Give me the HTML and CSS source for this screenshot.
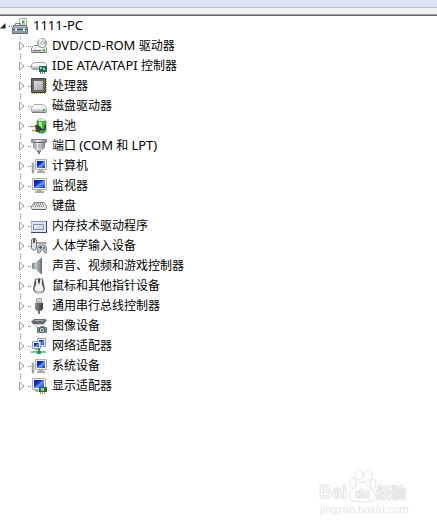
FILE: index.html
```
<!DOCTYPE html>
<html lang="zh-CN">
<head>
  <meta charset="UTF-8" />
  <meta name="viewport" content="width=device-width, initial-scale=1.0"/>
  <title>设备管理器</title>
  <link rel="stylesheet" href="styles.css">
</head>
<body>
  <!-- shared gradients and shapes -->
  <svg class="defs" width="0" height="0" aria-hidden="true">
    <defs>
      <linearGradient id="screen" x1="0" y1="0" x2="1" y2="1">
        <stop offset="0" stop-color="#0a1fa8"/><stop offset=".4" stop-color="#0f2fd0"/><stop offset=".55" stop-color="#6f98f4"/><stop offset="1" stop-color="#1236c4"/>
      </linearGradient>
      <linearGradient id="metal" x1="0" y1="0" x2="0" y2="1">
        <stop offset="0" stop-color="#fafafa"/><stop offset="1" stop-color="#a3a5a8"/>
      </linearGradient>
      <linearGradient id="steel" x1="0" y1="0" x2="1" y2="0">
        <stop offset="0" stop-color="#84888c"/><stop offset=".4" stop-color="#eceeef"/><stop offset="1" stop-color="#777b80"/>
      </linearGradient>
      <linearGradient id="dark" x1="0" y1="0" x2="1" y2="0">
        <stop offset="0" stop-color="#8d9094"/><stop offset=".5" stop-color="#606367"/><stop offset="1" stop-color="#3c3e42"/>
      </linearGradient>
      <linearGradient id="cone" x1="0" y1="0" x2="1" y2="0">
        <stop offset="0" stop-color="#c3d0d6"/><stop offset=".6" stop-color="#8c999f"/><stop offset="1" stop-color="#5f696e"/>
      </linearGradient>
      <linearGradient id="chip" x1="0" y1="0" x2="1" y2="1">
        <stop offset="0" stop-color="#e0e0e0"/><stop offset="1" stop-color="#a2a4a6"/>
      </linearGradient>
      <symbol id="arrow" viewBox="0 0 6 10">
        <path d="M.5 1v8l4.500-4z" fill="#fff" stroke="#a0a0a0"/>
      </symbol>
      <symbol id="pc" viewBox="0 0 16 16">
        <path d="M1 5h2v10H1z" fill="#b4b8bc" stroke="#85898e" stroke-width=".5"/>
        <path d="M1 12h1v2H1z" fill="#35b535"/>
        <path d="M4.500 1.500h11v10h-11z" fill="#f0efe8" stroke="#b0afa6"/>
        <path d="M6 3h8v7H6z" fill="url(#screen)"/>
        <path d="M8 12h4v1h2v2H6v-2h2z" fill="#a9a9a4"/>
      </symbol>
    </defs>
  </svg>

  <div class="toolbar"></div>
  <div class="band"></div>

  <main class="panel">
    <div class="node root">
      <button class="toggle" aria-label="折叠 1111-PC" aria-expanded="true"><svg viewBox="0 0 6 6"><path d="M5.500 0v5.500H0z" fill="#222"/></svg></button>
      <span class="dots"></span>
      <svg class="icon" viewBox="0 0 16 16"><path d="M7.500.5h7v8h-7z" fill="#f2f3f0" stroke="#aaada9"/><path d="M10 2h3v6h-3z" fill="#bdc8b9"/><path d="M10 3h2v2h-2z" fill="#49a83b"/><path d="M3.500 8V5.500h5V8" fill="none" stroke="#7c858d"/><path d="M1.500 7.500h13l1 3v5H.5v-5z" fill="#8b9caa" stroke="#5f6d79"/><path d="M2 8.500h12" stroke="#b9c6d0"/><path d="M1 11.500h14" stroke="#4b5a68"/><path d="M3 10h2v3H3zM11 10h2v3h-2z" fill="#dae1e7"/></svg>
      <span class="label"><span class="en">1111-PC</span></span>
    </div>

    <ul class="tree">
      <li class="node">
        <button class="toggle" aria-label="展开 DVD/CD-ROM 驱动器"><svg><use href="#arrow"/></svg></button>
        <span class="dots"></span>
        <svg class="icon" viewBox="0 0 16 16"><path d="M3 7.500h10l2.500 2.500v4.500H.5V10z" fill="#eee" stroke="#909295"/><circle cx="11" cy="5" r="4.500" fill="#e0e3e3" stroke="#8f9394"/><path d="M11 5L8 1l3-.5zM11 5l-1 4 3 0z" fill="#fff"/><path d="M11 5l4-2v3z" fill="#8fc985"/><circle cx="11" cy="5" r="1.300" fill="#fff" stroke="#999" stroke-width=".6"/><path d="M1 10.500h14V15H1z" fill="url(#metal)"/><path d="M2 12.500h8M1 14.500h14" stroke="#777"/><path d="M12 11h2v2h-2z" fill="#37c42e"/></svg>
        <span class="label"><span class="en">DVD/CD-ROM </span>驱动器</span>
      </li>
      <li class="node">
        <button class="toggle" aria-label="展开 IDE ATA/ATAPI 控制器"><svg><use href="#arrow"/></svg></button>
        <span class="dots"></span>
        <svg class="icon" viewBox="0 0 16 16"><path d="M3 4.500h10l2.500 2v4l-1 1h-13l-1-1v-4z" fill="#fafafa" stroke="#a0a2a5"/><path d="M1 7.500h14V11H1z" fill="url(#metal)"/><path d="M8 8h8v6H8z" fill="#1d6f50"/><path d="M9 9h2v2H9zM12 10h2v2h-2z" fill="#8fd1b3"/><path d="M9.500 14v2M11.500 14v2M13.500 14v2" stroke="#4a9a6c"/></svg>
        <span class="label"><span class="en">IDE ATA/ATAPI </span>控制器</span>
      </li>
      <li class="node">
        <button class="toggle" aria-label="展开 处理器"><svg><use href="#arrow"/></svg></button>
        <span class="dots"></span>
        <svg class="icon" viewBox="0 0 16 16"><path d="M15.500 1v14M1 15.500h14" stroke="#d09a2c" stroke-dasharray="1 1"/><path d="M.5.500h14v14H.5z" fill="#66686a" stroke="#444648"/><path d="M3 3h9v9H3z" fill="url(#chip)"/></svg>
        <span class="label">处理器</span>
      </li>
      <li class="node">
        <button class="toggle" aria-label="展开 磁盘驱动器"><svg><use href="#arrow"/></svg></button>
        <span class="dots"></span>
        <svg class="icon" viewBox="0 0 16 16"><path d="M3.500 6.500h9l3 3v4l-1 1h-13l-1-1v-4z" fill="#f7f7f7" stroke="#a8aaac"/><path d="M1 10h14v4H1z" fill="url(#metal)"/><path d="M1 14.500h14" stroke="#77797c"/><path d="M12 11h2v2h-2z" fill="#37c42e"/></svg>
        <span class="label">磁盘驱动器</span>
      </li>
      <li class="node">
        <button class="toggle" aria-label="展开 电池"><svg><use href="#arrow"/></svg></button>
        <span class="dots"></span>
        <svg class="icon" viewBox="0 0 16 16"><path d="M6 3l2-2h4l3 2v10l-2 2H8l-2-2z" fill="#3fb235" stroke="#3a8037" stroke-width=".7"/><path d="M8 1h5l1 2H7z" fill="#e4e8e2"/><path d="M8 4h3v6H8z" fill="#b2f0a4"/><path d="M0 8.500h4M1 12.500h4" stroke="#c99a2a" stroke-width="1.500"/><path d="M4 7h3l3 2v3l-2 2H5z" fill="#3d4241"/><path d="M9 11c5 2 6-1 5-4" fill="none" stroke="#303331" stroke-width="1.500"/></svg>
        <span class="label">电池</span>
      </li>
      <li class="node">
        <button class="toggle" aria-label="展开 端口 (COM 和 LPT)"><svg><use href="#arrow"/></svg></button>
        <span class="dots"></span>
        <svg class="icon" viewBox="0 0 16 16"><path d="M.5 1.500h15v3h-2v5l-2 2h-7l-2-2v-5h-2z" fill="url(#steel)" stroke="#85888c"/><path d="M3 4.500h10" stroke="#5f6367"/><path d="M5 6v4M8 6v4M11 6v4" stroke="#8b8f93"/><path d="M5 11h6v2H5z" fill="#bfc2c4"/><path d="M6 13h4v1H9v2H7v-2H6z" fill="#777a7e"/></svg>
        <span class="label">端口 <span class="en">(COM </span>和 <span class="en">LPT)</span></span>
      </li>
      <li class="node">
        <button class="toggle" aria-label="展开 计算机"><svg><use href="#arrow"/></svg></button>
        <span class="dots"></span>
        <svg class="icon"><use href="#pc"/></svg>
        <span class="label">计算机</span>
      </li>
      <li class="node">
        <button class="toggle" aria-label="展开 监视器"><svg><use href="#arrow"/></svg></button>
        <span class="dots"></span>
        <svg class="icon" viewBox="0 0 16 16"><path d="M1.500.5h14v11h-14z" fill="#f0efe8" stroke="#b0afa6"/><path d="M3 2h11v8H3z" fill="url(#screen)"/><path d="M6 12h5v1h2v2H4v-2h2z" fill="#a9a9a4"/></svg>
        <span class="label">监视器</span>
      </li>
      <li class="node">
        <button class="toggle" aria-label="展开 键盘"><svg><use href="#arrow"/></svg></button>
        <span class="dots"></span>
        <svg class="icon" viewBox="0 0 16 16"><path d="M3 4.500h10l2.500 4v2l-1 1h-13l-1-1v-2z" fill="#e2e3e5" stroke="#85888b"/><path d="M3 6.500h10M2 8.500h12" stroke="#888b8f" stroke-dasharray="1 1"/><path d="M4 7.500h10M3 5.500h10" stroke="#a4a6a9" stroke-dasharray="1 1"/><path d="M1 11.500h14" stroke="#606367"/></svg>
        <span class="label">键盘</span>
      </li>
      <li class="node">
        <button class="toggle" aria-label="展开 内存技术驱动程序"><svg><use href="#arrow"/></svg></button>
        <span class="dots"></span>
        <svg class="icon" viewBox="0 0 16 16"><path d="M0 3.500h16v11H0z" fill="#dfe5f3" stroke="#8591ae"/><path d="M15.500 3v11.500H0" fill="none" stroke="#3e465c"/><path d="M2.500 6.500h10v5h-10z" fill="#d3dbeb" stroke="#7f8db0"/><path d="M3 11l6-4H3z" fill="#eff2f8"/></svg>
        <span class="label">内存技术驱动程序</span>
      </li>
      <li class="node">
        <button class="toggle" aria-label="展开 人体学输入设备"><svg><use href="#arrow"/></svg></button>
        <span class="dots"></span>
        <svg class="icon" viewBox="0 0 16 16"><path d="M.5 2l1-1.500h3L5.500 3v6l-1 3h-3l-1-2z" fill="#e1e3e5" stroke="#74797e"/><path d="M2 1h2v4H2z" fill="#565b62"/><path d="M6 4.500h9.500M6 5.500h9.500" stroke="#9aa2a9"/><path d="M7 8l1-1h6l1.500 2v6h-2l-1-3H10l-1 3H6.500v-5z" fill="#b9c3cc" stroke="#6f7982" stroke-width=".8"/><path d="M8 9.500h3M9.500 8v3" stroke="#4d565f"/><path d="M12 9h2v2h-2z" fill="#3f86bb"/></svg>
        <span class="label">人体学输入设备</span>
      </li>
      <li class="node">
        <button class="toggle" aria-label="展开 声音、视频和游戏控制器"><svg><use href="#arrow"/></svg></button>
        <span class="dots"></span>
        <svg class="icon" viewBox="0 0 16 16"><path d="M1.500 5.500h3v5h-3z" fill="#9aa5ab" stroke="#7d888e"/><path d="M4 5l6-5h1v16h-1l-6-5z" fill="url(#cone)"/><path d="M10.500 0v16" stroke="#667075"/></svg>
        <span class="label">声音、视频和游戏控制器</span>
      </li>
      <li class="node">
        <button class="toggle" aria-label="展开 鼠标和其他指针设备"><svg><use href="#arrow"/></svg></button>
        <span class="dots"></span>
        <svg class="icon" viewBox="0 0 16 16"><path d="M4 1Q8-.5 12 1l2 10q-1 4.500-6 4.500T2 11z" fill="#5a5d60"/><path d="M5 1.500Q8 .5 11 1.500 10 7 12.500 10q0 5-4.500 5t-4.500-5Q6 7 5 1.500z" fill="#f3f3f3"/><path d="M7 1h2v4H7z" fill="#45484b"/><path d="M8 5v2" stroke="#999"/><path d="M5 13q3 2 6 0" fill="none" stroke="#b0b2b4"/></svg>
        <span class="label">鼠标和其他指针设备</span>
      </li>
      <li class="node">
        <button class="toggle" aria-label="展开 通用串行总线控制器"><svg><use href="#arrow"/></svg></button>
        <span class="dots"></span>
        <svg class="icon" viewBox="0 0 16 16"><path d="M5.500.5h5V5h-5z" fill="#e9eaeb" stroke="#9b9da0"/><path d="M7 2v2h2V2" fill="none" stroke="#aaa"/><path d="M4 5h8v6l-2 2H6l-2-2z" fill="url(#dark)"/><path d="M7 13h2v3H7z" fill="#76797c"/></svg>
        <span class="label">通用串行总线控制器</span>
      </li>
      <li class="node">
        <button class="toggle" aria-label="展开 图像设备"><svg><use href="#arrow"/></svg></button>
        <span class="dots"></span>
        <svg class="icon" viewBox="0 0 16 16"><path d="M3 1h11l2 1-3 4H2L0 4z" fill="#656c71"/><path d="M4 2h9l-1 1H3z" fill="#aab3b8"/><path d="M2 6.500h11" stroke="#c3c8cb"/><path d="M3 7l5 2v2z" fill="#a4aaae"/><path d="M6 9h3l1-1h3l1 1h2v6H6z" fill="#758089"/><circle cx="11" cy="12" r="2.600" fill="#f1f5f7" stroke="#47525a"/><circle cx="11" cy="12" r="1.200" fill="#357094"/></svg>
        <span class="label">图像设备</span>
      </li>
      <li class="node">
        <button class="toggle" aria-label="展开 网络适配器"><svg><use href="#arrow"/></svg></button>
        <span class="dots"></span>
        <svg class="icon" viewBox="0 0 16 16"><path d="M6.500.5h8v8h-8z" fill="#eef1f4" stroke="#8f9fb8"/><path d="M8 2h5v5H8z" fill="url(#screen)"/><path d="M1.500 3.500h8v7h-8z" fill="#eef1f4" stroke="#8f9fb8"/><path d="M3 5h5v4H3z" fill="url(#screen)"/><path d="M4 11h3v1H4z" fill="#a4aab0"/><path d="M0 14h15" stroke="#6fcf9f" stroke-width="2"/><path d="M7 10h2v3h1v3H6v-3h1z" fill="#219a58"/></svg>
        <span class="label">网络适配器</span>
      </li>
      <li class="node">
        <button class="toggle" aria-label="展开 系统设备"><svg><use href="#arrow"/></svg></button>
        <span class="dots"></span>
        <svg class="icon"><use href="#pc"/></svg>
        <span class="label">系统设备</span>
      </li>
      <li class="node">
        <button class="toggle" aria-label="展开 显示适配器"><svg><use href="#arrow"/></svg></button>
        <span class="dots"></span>
        <svg class="icon" viewBox="0 0 16 16"><path d="M1.500.5h13v11h-13z" fill="#f0efe8" stroke="#b0afa6"/><path d="M3 2h10v8H3z" fill="url(#screen)"/><path d="M4 12h5v2H4z" fill="#b4b4ae"/><path d="M8 9h8v5H8z" fill="#2c6b4e"/><path d="M10 10h3v3h-3z" fill="#92c9a8"/><path d="M9.500 14v2M11.500 14v2M13.500 14v2" stroke="#b99b3d"/></svg>
        <span class="label">显示适配器</span>
      </li>
    </ul>
  </main>

  <svg class="watermark" viewBox="0 0 92 52" aria-label="百度经验">
    <g class="mark">
      <ellipse cx="34" cy="17" rx="3" ry="5"/>
      <ellipse cx="40" cy="9" rx="4" ry="5"/>
      <ellipse cx="49" cy="9" rx="4" ry="5"/>
      <ellipse cx="54" cy="18" rx="3" ry="5"/>
      <path d="M43 16c4 0 5 4 9 7s6 10 0 12c-4 1-13 1-18 0-6-2-4-9 0-12s5-7 9-7z"/>
      <text class="brand" x="0" y="32">Bai</text>
      <text class="du" x="36" y="32">du</text>
      <text class="cn" x="57" y="32">经验</text>
      <text class="url" x="1" y="47">jingyan.baidu.com</text>
    </g>
  </svg>
</body>
</html>
```

FILE: styles.css
```
body {
  margin: 0;
  min-height: 100vh;
  background: #fff;
  color: #000;
  font-family: "Noto Sans", "Noto Sans CJK SC", sans-serif;
  font-size: 12px;
  position: relative;
}

.defs {
  position: absolute;
}

.toolbar {
  height: 7px;
  background: #dce3f4;
  border-bottom: 1px solid #b3b9ce;
}

.band {
  height: 6px;
  background: #f0f0f0;
  border-bottom: 1px solid #a0a0a0;
}

.panel {
  border-top: 1px solid #646464;
}

.tree {
  list-style: none;
  margin: 0;
  padding: 0 0 0 18px;
}

.node {
  display: flex;
  align-items: center;
  height: 20px;
}

/* vertical guide, hidden behind the arrows */
.tree .node {
  background: repeating-linear-gradient(to bottom, #777 0 1px, #fff 1px 2px) 2px 0 / 1px 100% no-repeat;
}

.tree .node:last-child {
  background-size: 1px 10px;
}

.toggle {
  display: flex;
  align-items: center;
  width: 8px;
  height: 14px;
  padding: 0 0 0 1px;
  border: none;
  background: #fff;
  cursor: pointer;
}

.toggle svg {
  width: 6px;
  height: 10px;
}

.root .toggle {
  padding: 0;
}

.root .toggle svg {
  height: 6px;
}

.dots {
  width: 3px;
  height: 1px;
  margin-left: 2px;
  background: repeating-linear-gradient(to right, #777 0 1px, #fff 1px 2px);
}

.root .dots {
  margin-left: 1px;
}

.icon {
  width: 16px;
  height: 16px;
  flex: none;
}

.label {
  margin-left: 5px;
  line-height: 20px;
  white-space: nowrap;
}

.en {
  font-size: 13px;
  line-height: 18px;
}

.watermark {
  position: absolute;
  right: 26px;
  bottom: 4px;
  width: 92px;
  height: 52px;
}

.mark {
  fill: #fff;
  stroke: #e4e4e4;
  stroke-width: 1px;
}

.mark text {
  font-family: "Liberation Sans", "Noto Sans CJK SC", sans-serif;
  font-weight: bold;
}

.brand {
  font-size: 18px;
}

.du {
  font-size: 12px;
}

.mark .cn {
  font-size: 15px;
}

.mark .url {
  font-size: 11px;
  font-weight: normal;
  fill: #e6e6e6;
  stroke: none;
}
```
